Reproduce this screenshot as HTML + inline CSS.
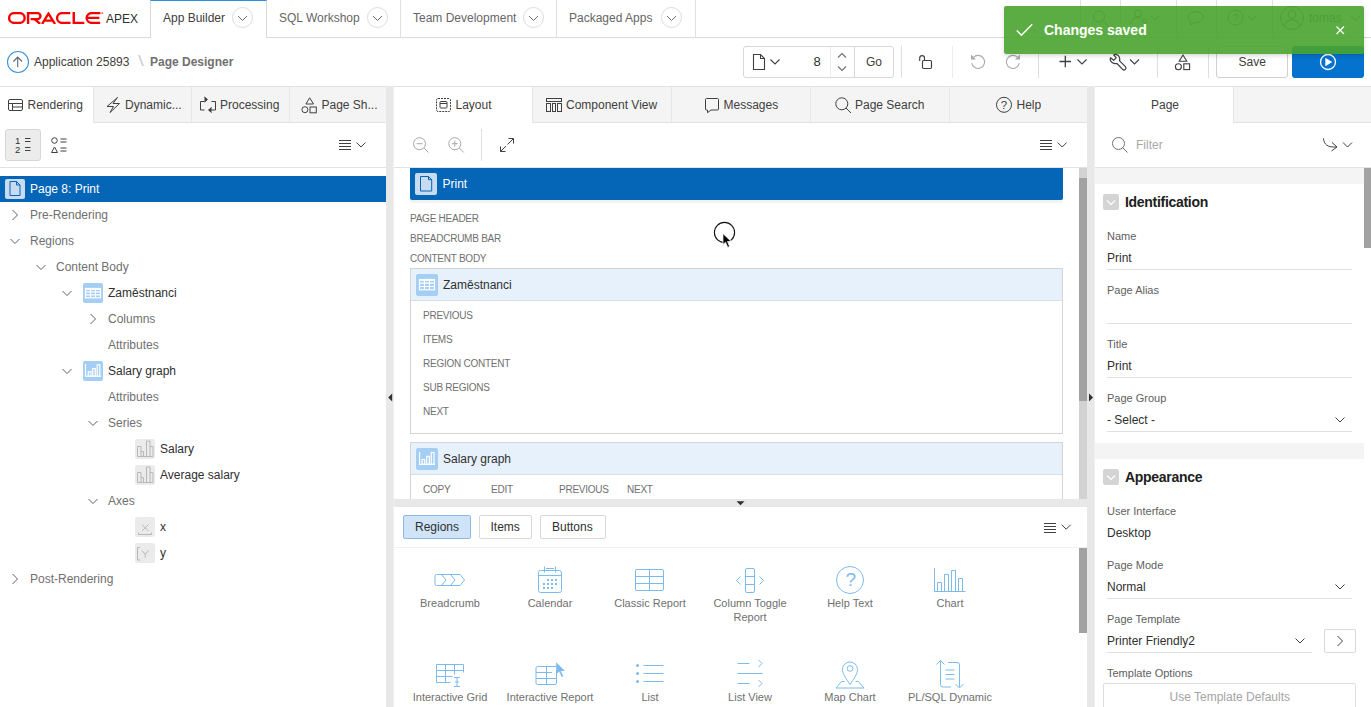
<!DOCTYPE html>
<html lang="en">
<head>
<meta charset="utf-8">
<title>Page Designer</title>
<style>
*{box-sizing:border-box;margin:0;padding:0}
html,body{width:1371px;height:707px;overflow:hidden;background:#fff}
body{font-family:"Liberation Sans",sans-serif;font-size:12px;color:#404040;position:relative}
.abs{position:absolute}
svg{position:absolute;overflow:visible}
.t{position:absolute;white-space:nowrap;line-height:16px}
.b{font-weight:bold}
/* header */
#hdr{position:absolute;left:0;top:0;width:1371px;height:38px;border-bottom:1px solid #d9d9d9;background:#fff}
.vsep{position:absolute;top:0;width:1px;height:37px;background:#e0e0e0}
.circ{position:absolute;width:21px;height:21px;border:1px solid #dcdcdc;border-radius:50%;top:7px}
.htxt{position:absolute;top:10px;font-size:12px;color:#666;line-height:16px;white-space:nowrap}
/* toolbar */
#tb{position:absolute;left:0;top:38px;width:1371px;height:48px;background:#fff}
.tsep{position:absolute;top:8px;width:1px;height:32px;background:#dedede}
/* panels */
.tabrow{position:absolute;top:86px;height:37px;background:#f4f4f4;border-top:1px solid #e2e2e2;border-bottom:1px solid #e2e2e2}
.tab{position:absolute;top:0;height:35px;border-right:1px solid #e6e6e6;font-size:12px;color:#404040;line-height:16px;white-space:nowrap}
.tab.sel{background:#fff;height:36px}
.tab span{position:absolute;top:10px}
.split{position:absolute;top:86px;width:8px;height:621px;background:#e8e8e8;border-right:1px solid #f0f0f0}
.ptb{position:absolute;top:123px;height:45px;background:#fff;border-bottom:1px solid #e2e2e2}
.row{position:absolute;left:0;width:386px;height:26px}
.row .t{top:5px}
.g{color:#707070}
.d{color:#303030}
.ico{position:absolute;top:3px;width:20px;height:20px;border-radius:2px}
.lbl{position:absolute;font-size:10px;line-height:14px;color:#707070;white-space:nowrap;letter-spacing:-0.25px}
.reg{position:absolute;left:410px;width:653px;border:1px solid #d4d4d4;background:#fff}
.reg .hd{position:absolute;left:0;top:0;width:651px;height:32px;background:#e7f1fc;border-bottom:1px solid #d6e0ea}
.gbtn{position:absolute;top:515px;height:24px;border:1px solid #d8d8d8;border-radius:2px;background:#fff}
.gl{position:absolute;width:100px;text-align:center;font-size:11px;line-height:14px;color:#707070}
.band{position:absolute;left:1095px;width:269px;height:16px;background:#f4f4f4}
.sec{position:absolute;left:1125px;font-size:14px;font-weight:bold;color:#202020;line-height:18px;white-space:nowrap;letter-spacing:-0.3px}
.col{position:absolute;left:1103px;width:16px;height:16px;background:#d4d4d4;border-radius:2px}
.pl{position:absolute;left:1107px;font-size:11px;line-height:14px;color:#606060;white-space:nowrap}
.pv{position:absolute;left:1107px;font-size:12px;line-height:16px;color:#303030;white-space:nowrap}
.ul{position:absolute;left:1107px;width:245px;height:1px;background:#e0e0e0}
</style>
</head>
<body>
<!-- HEADER -->
<div id="hdr">
  <div class="t" style="left:106px;top:11px;font-size:12px;color:#303030">APEX</div>
  <svg style="left:7.700px;top:11.800px;overflow:hidden" width="96.400" height="12.500" viewBox="0 0 96 13" preserveAspectRatio="none"><g fill="none" stroke="#f80000" stroke-width="2.4">
    <rect x="1.1" y="1.1" width="15.5" height="10.3" rx="5.15"/>
    <path d="M20 12.5V1.1h9.2a3.1 3.1 0 0 1 0 6.3H22.5M26.5 7.4l5.5 5"/>
    <path d="M34 12.5L40.3 1.6 46.8 12.5M37 9h8"/>
    <path d="M62 1.1H54a5.15 5.15 0 0 0 0 10.3h8.3"/>
    <path d="M65.5 0v11.4h10.5"/>
    <path d="M92 1.1H83.5a5.15 5.15 0 0 0 0 10.3h8.3M79.5 6.2h11.5"/>
  </g><circle cx="93.800" cy="1.200" r="1" fill="#f86060"/></svg>
  <div class="abs" style="left:150px;top:0;width:117px;height:38px;background:#fff;border-left:1px solid #d9d9d9;border-right:1px solid #d9d9d9;border-top:1px solid #2d8de0"></div>
  <div class="htxt" style="left:163px;color:#404040">App Builder</div>
  <div class="circ" style="left:232px"></div>
  <div class="htxt" style="left:279px">SQL Workshop</div>
  <div class="circ" style="left:367px"></div>
  <div class="vsep" style="left:400px"></div>
  <div class="htxt" style="left:413px">Team Development</div>
  <div class="circ" style="left:523px"></div>
  <div class="vsep" style="left:556px"></div>
  <div class="htxt" style="left:569px">Packaged Apps</div>
  <div class="circ" style="left:661px"></div>
  <div class="vsep" style="left:695px"></div>
  <svg style="left:0;top:0" width="1371" height="37" fill="none" stroke="#707070" stroke-width="1">
    <path d="M238 16l4.5 4.5 4.5-4.5M373 16l4.5 4.5 4.5-4.5M529 16l4.5 4.5 4.5-4.5M667 16l4.5 4.5 4.5-4.5"/>
  </svg>
  <!-- right side nav (beneath notification) -->
  <div class="vsep" style="left:1080px"></div>
  <div class="vsep" style="left:1120px"></div>
  <div class="vsep" style="left:1176px"></div>
  <div class="vsep" style="left:1216px"></div>
  <div class="vsep" style="left:1272px"></div>
  <svg style="left:0;top:0" width="1371" height="37" fill="none" stroke="#707070" stroke-width="1">
    <circle cx="1099" cy="16.5" r="5.5"/><path d="M1103 20.5l5 5"/>
    <circle cx="1138" cy="13.5" r="3.5"/><path d="M1131 24c0-4 3-6.5 7-6.500 2 0 3.500.7 4.500 1.600"/><circle cx="1145" cy="21" r="2"/>
    <path d="M1151 16l4 4 4-4"/>
    <path d="M1191 21.300a7.500 5.500 0 1 1 4 1.200l-4.500 2.500z"/>
    <circle cx="1235.500" cy="17.500" r="7.500"/>
    <path d="M1248 16l4 4 4-4"/>
    <circle cx="1292" cy="18" r="11.500"/><circle cx="1292" cy="14.500" r="4"/><path d="M1284 26c1-4 4-6 8-6s7 2 8 6"/>
    <path d="M1351 16l4.500 4.500 4.500-4.500"/>
  </svg>
  <div class="htxt" style="left:1232.500px;top:10px;font-size:11px;color:#707070">?</div>
  <div class="htxt" style="left:1309px">tomas</div>
</div>
<!-- TOOLBAR -->
<div id="tb">
  <svg style="left:0;top:0" width="400" height="48" fill="none">
    <circle cx="18" cy="24" r="10.500" stroke="#3c94e4" stroke-width="1.100"/>
    <path d="M17.700 29.300v-10.300M13.400 23.500l4.300-4.500 4.300 4.500" stroke="#56677a" stroke-width="1.100"/>
  </svg>
  <div class="t" style="left:34px;top:16px;color:#404040">Application 25893</div>
  <div class="t" style="left:138.400px;top:15px;color:#cfcfcf;font-size:15px;transform:scaleX(1.4);transform-origin:0 0">\</div>
  <div class="t b" style="left:150px;top:16px;color:#707070">Page Designer</div>

  <!-- page selector -->
  <div class="abs" style="left:743px;top:8px;width:151px;height:32px;border:1px solid #d8d8d8;border-radius:3px;background:#fff"></div>
  <div class="abs" style="left:830px;top:9px;width:1px;height:30px;background:#ececec"></div>
  <div class="abs" style="left:854px;top:9px;width:1px;height:30px;background:#d8d8d8"></div>
  <div class="t" style="left:813.500px;top:16px;font-size:13px;color:#303030">8</div>
  <div class="t" style="left:866px;top:16px;color:#404040">Go</div>
  <div class="tsep" style="left:901px"></div>
  <div class="tsep" style="left:952px;background:#ececec"></div>
  <div class="tsep" style="left:1038px"></div>
  <div class="tsep" style="left:1157px"></div>
  <div class="tsep" style="left:1208px"></div>
  <svg style="left:0;top:-38px" width="1371" height="86" fill="none" stroke="#404040" stroke-width="1.100">
    <!-- page icon -->
    <path d="M753.500 54.500h7l4 4v11h-11zM760.500 54.500v4h4"/>
    <path d="M770.500 59.500l4.500 4.500 4.500-4.500"/>
    <path d="M838 57.500l4-4 4 4M838 66.500l4 4 4-4" stroke="#707070"/>
    <!-- unlock -->
    <rect x="922.500" y="60.500" width="9" height="8" rx="1.200" stroke-width="1.150"/>
    <path d="M919.700 61v-3a2.400 2.400 0 0 1 4.800 0v2.500" stroke-width="1.150"/>
    <!-- undo / redo -->
    <g stroke="#aaa">
      <path d="M973.200 57.600a6.500 6.500 0 1 1-1.500 5.600"/>
      <path d="M971 54.500v5h5z" fill="#aaa" stroke="none"/>
      <path d="M1017.800 57.600a6.500 6.500 0 1 0 1.500 5.600"/>
      <path d="M1020 54.500v5h-5z" fill="#aaa" stroke="none"/>
    </g>
    <!-- plus -->
    <path d="M1059.500 61.500h11.500M1065.300 55.700v11.600" stroke-width="1.300"/>
    <path d="M1077.500 59.500l4.500 4.500 4.500-4.500"/>
    <!-- wrench -->
    <path d="M1113.700 54.900C1115 54 1118 54.500 1119 56.500C1120 58.500 1119.800 60 1119.600 60.800L1125.400 66.600A1.900 1.900 0 0 1 1122.600 69.300L1117 63.500C1115.500 63.900 1114 63.800 1112.500 62.800C1110.500 61.500 1109.800 59.500 1110.500 57.800L1113.700 60.300L1116.200 57.800Z" stroke-width="1.200" stroke-linejoin="round"/>
    <path d="M1130 59.500l4.500 4.500 4.500-4.500"/>
    <!-- shapes -->
    <path d="M1183 55l3.800 6.200h-7.600z"/><circle cx="1178.400" cy="66.700" r="3"/><rect x="1183.800" y="63.800" width="5.800" height="5.800"/>
  </svg>
  <div class="abs" style="left:1216px;top:8px;width:72px;height:32px;border:1px solid #d0d0d0;border-radius:3px;background:#fff"></div>
  <div class="t" style="left:1238.500px;top:16px;color:#404040">Save</div>
  <div class="abs" style="left:1292px;top:8px;width:72px;height:32px;border-radius:3px;background:#0572ce"></div>
  <svg style="left:1292px;top:8px" width="72" height="32" fill="none"><circle cx="36" cy="16" r="7.500" stroke="#fff" stroke-width="1.300"/><path d="M33.300 11.800l7 4.200-7 4.200z" fill="#fff"/></svg>
</div>

<!-- NOTIFICATION -->
<div class="abs" style="left:1004px;top:6px;width:360px;height:48px;border-radius:2px;background:rgba(73,164,47,0.9);box-shadow:0 2px 4px rgba(0,0,0,0.15);z-index:50">
  <svg style="left:12px;top:17px" width="18" height="14" fill="none" stroke="#fff" stroke-width="1.500"><path d="M0.800 7.500l4.700 4.700 10.700-11"/></svg>
  <div class="t b" style="left:40px;top:15px;font-size:14px;color:#fff;letter-spacing:0;line-height:18px">Changes saved</div>
  <svg style="left:332px;top:20px" width="9" height="9" fill="none" stroke="#fff" stroke-width="1.200"><path d="M0.500 0.500l7.500 7.500M8 0.500l-7.500 7.500"/></svg>
</div>
<!-- SPLITTERS -->
<div class="split" style="left:386px"></div>
<div class="split" style="left:1087px"></div>
<svg style="left:386px;top:86px" width="716" height="621"><path d="M6.200 307.500v8l-4-4z" fill="#303030"/><path d="M703 307.500v8l4-4z" fill="#303030"/></svg>

<!-- LEFT PANEL -->
<div class="tabrow" style="left:0;width:386px">
  <div class="tab sel" style="left:0;width:94px"><span style="left:27.500px">Rendering</span></div>
  <div class="tab" style="left:94px;width:98px"><span style="left:31px">Dynamic...</span></div>
  <div class="tab" style="left:192px;width:98px"><span style="left:28px">Processing</span></div>
  <div class="tab" style="left:290px;width:96px;border-right:0"><span style="left:31.500px">Page Sh...</span></div>
</div>
<svg style="left:0;top:86px" width="386" height="37" fill="none" stroke="#404040" stroke-width="1">
  <!-- rendering -->
  <rect x="8.500" y="13.500" width="14" height="11" rx="1.500"/><path d="M8.500 17.500h14M12.500 17.500v7M12.500 21h10"/>
  <!-- bolt -->
  <path d="M117.500 11.500l-10.500 9h6.500l-3.500 6 9.500-9h-6.500z" stroke-linejoin="round"/>
  <!-- processing -->
  <path d="M204.500 15.500h-4v8.500h4M204.500 11l2.800 2.500-2.800 2.500M205 13.500h2"/>
  <path d="M211.500 15.500h4v8.500h-6.500M211.500 21.500l-2.800 2.500 2.800 2.500"/>
  <path d="M207.800 13.500l-3.300-2.800v5.600z" fill="#404040" stroke="none"/>
  <path d="M208.200 24l3.300-2.800v5.600z" fill="#404040" stroke="none"/>
  <!-- shapes -->
  <path d="M309.700 11.800l3.800 6.200h-7.600z"/><circle cx="304.900" cy="23.700" r="3"/><rect x="310" y="21" width="6.300" height="5.800"/>
</svg>
<div class="ptb" style="left:0;width:386px">
  <div class="abs" style="left:5px;top:6px;width:36px;height:32px;background:#ececec;border:1px solid #d6d6d6;border-radius:3px"></div>
  <div class="t" style="left:15px;top:13px;font-size:9.500px;line-height:9px;color:#303030;letter-spacing:0">1</div>
  <div class="t" style="left:15px;top:22px;font-size:9.500px;line-height:9px;color:#303030;letter-spacing:0">2</div>
  <svg style="left:0;top:0" width="386" height="44" fill="none" stroke="#404040" stroke-width="1">
    <path d="M25 15.500h5.500M25 18.500h5.500M25 24.500h5.500M25 27.500h5.500"/>
    <circle cx="54.500" cy="17.500" r="2.800"/><path d="M54.500 24l3 5.500h-6z"/>
    <path d="M60.500 16h6M60.500 19h6M60.500 25h6M60.500 28h6"/>
    <path d="M339 17.500h12M339 20.500h12M339 23.500h12M339 26.500h12"/>
    <path d="M356.500 19.500l4.500 4.500 4.500-4.500"/>
  </svg>
</div>
<!-- TREE -->
<div id="tree" class="abs" style="left:0;top:176px;width:386px;height:531px">
  <div class="row" style="top:0;background:#0565b7"><div class="ico" style="left:5px;background:#c9dbf1"></div><div class="t" style="left:30px;color:#fff">Page 8: Print</div></div>
  <div class="row" style="top:26px"><div class="t g" style="left:30px">Pre-Rendering</div></div>
  <div class="row" style="top:52px"><div class="t g" style="left:30px">Regions</div></div>
  <div class="row" style="top:78px"><div class="t g" style="left:56px">Content Body</div></div>
  <div class="row" style="top:104px"><div class="ico" style="left:83px;background:#a5cef4"></div><div class="t d" style="left:108px">Zaměstnanci</div></div>
  <div class="row" style="top:130px"><div class="t g" style="left:108px">Columns</div></div>
  <div class="row" style="top:156px"><div class="t g" style="left:108px">Attributes</div></div>
  <div class="row" style="top:182px"><div class="ico" style="left:83px;background:#a5cef4"></div><div class="t d" style="left:108px">Salary graph</div></div>
  <div class="row" style="top:208px"><div class="t g" style="left:108px">Attributes</div></div>
  <div class="row" style="top:234px"><div class="t g" style="left:108px">Series</div></div>
  <div class="row" style="top:260px"><div class="ico" style="left:135px;background:#ebebeb"></div><div class="t d" style="left:160px">Salary</div></div>
  <div class="row" style="top:286px"><div class="ico" style="left:135px;background:#ebebeb"></div><div class="t d" style="left:160px">Average salary</div></div>
  <div class="row" style="top:312px"><div class="t g" style="left:108px">Axes</div></div>
  <div class="row" style="top:338px"><div class="ico" style="left:135px;background:#ebebeb"></div><div class="t d" style="left:160px">x</div></div>
  <div class="row" style="top:364px"><div class="ico" style="left:135px;background:#ebebeb"></div><div class="t d" style="left:160px">y</div></div>
  <div class="row" style="top:390px"><div class="t g" style="left:30px">Post-Rendering</div></div>
  <svg style="left:0;top:0" width="386" height="420" fill="none" stroke="#606060" stroke-width="1">
    <!-- chevrons -->
    <path d="M12.500 34l5 5-5 5"/>
    <path d="M10.500 63l4.500 4.500 4.500-4.500"/>
    <path d="M36.500 89l4.500 4.500 4.500-4.500"/>
    <path d="M62.500 115l4.500 4.500 4.500-4.500"/>
    <path d="M90.500 138l5 5-5 5"/>
    <path d="M62.500 193l4.500 4.500 4.500-4.500"/>
    <path d="M88.500 245l4.500 4.500 4.500-4.500"/>
    <path d="M88.500 323l4.500 4.500 4.500-4.500"/>
    <path d="M12.500 398l5 5-5 5"/>
    <!-- page icon -->
    <path d="M10 5.500h6.500l3.500 3.500v10.500h-10zM16.500 5.500v3.500h3.500" stroke="#0565b7"/>
    <!-- grid icon -->
    <g stroke="#fff" stroke-width="1.200"><rect x="85.500" y="112.500" width="15" height="9.300" fill="none"/><path d="M85.500 113h15" stroke-width="1.800"/><path d="M85.500 115.800h15M85.500 118.800h15M90.500 112.500v9.300M95.500 112.500v9.300"/></g>
    <!-- chart icon -->
    <g stroke="#fff" stroke-width="1.200"><path d="M85.500 188v12.200h15.500"/><rect x="88.300" y="195.700" width="2.600" height="4.500"/><rect x="92.700" y="192.600" width="2.600" height="7.600"/><rect x="97.200" y="188.800" width="2.600" height="11.400"/></g>
    <!-- series icons -->
    <g stroke="#b8b8b8"><path d="M137.500 280.500v-10h3.500v10M141 275.500h2.500v5M137.500 280.500h15.500M146.500 280.500v-15.500h3.500v15.500M150 270.500h3v10"/>
    <path d="M137.500 306.500v-10h3.500v10M141 301.500h2.500v5M137.500 306.500h15.500M146.500 306.500v-15.500h3.500v15.500M150 296.500h3v10"/>
    <path d="M142 348.500l6.500 6.500M148.500 348.500l-6.500 6.500M138.500 356.500v2h13v-2"/>
    <path d="M140 371.500h-2.500v12.500h2.500M142 374.500l3.200 3.800 3.200-3.800M145.200 378.300v3.200"/></g>
  </svg>
</div>
<!-- CENTER PANEL -->
<div class="tabrow" style="left:394px;width:693px">
  <div class="tab sel" style="left:0;width:139px"><span style="left:61.500px">Layout</span></div>
  <div class="tab" style="left:139px;width:139px"><span style="left:33px">Component View</span></div>
  <div class="tab" style="left:278px;width:139px"><span style="left:51.500px">Messages</span></div>
  <div class="tab" style="left:417px;width:139px"><span style="left:44px">Page Search</span></div>
  <div class="tab" style="left:556px;width:137px;border-right:0"><span style="left:66.500px">Help</span></div>
</div>
<svg style="left:394px;top:86px" width="693" height="37" fill="none" stroke="#404040" stroke-width="1">
  <!-- layout -->
  <rect x="42.500" y="12.500" width="14" height="13" rx="1.500" stroke-dasharray="2 1"/><rect x="46" y="15.500" width="7" height="6.500" rx=".8"/><path d="M46 17.500h7"/>
  <!-- component view -->
  <rect x="152.500" y="12.500" width="15" height="3"/><rect x="152.500" y="17.500" width="4" height="8"/><rect x="158.500" y="17.500" width="3" height="8"/><rect x="163.500" y="17.500" width="4" height="8"/>
  <!-- messages -->
  <path d="M312.500 12.500h11a1 1 0 0 1 1 1v9.500a1 1 0 0 1-1 1h-6.500l-3.500 2.700v-2.700h-1a1 1 0 0 1-1-1v-9.500a1 1 0 0 1 1-1z"/>
  <!-- search -->
  <circle cx="447.800" cy="17.800" r="6"/><path d="M452 22l5 5"/>
  <!-- help -->
  <circle cx="610" cy="18.800" r="7.500"/>
</svg>
<div class="t" style="left:1000.800px;top:97px;font-size:11.500px;color:#404040;letter-spacing:0">?</div>
<div class="ptb" style="left:394px;width:693px">
  <div class="abs" style="left:87px;top:6px;width:1px;height:32px;background:#e0e0e0"></div>
  <svg style="left:0;top:0" width="693" height="44" fill="none" stroke="#404040" stroke-width="1">
    <g stroke="#a8a8a8"><circle cx="25.500" cy="20.700" r="6"/><path d="M30 25l4.500 4.500M22.500 20.700h6"/>
    <circle cx="60.800" cy="20.700" r="6"/><path d="M65.300 25l4.500 4.500M57.800 20.700h6M60.800 17.700v6"/></g>
    <path d="M113.500 21.500l6-6M114.500 15.500h5v5M112 23l-5.500 5.500M106.500 23.500v5h5"/>
    <path d="M646 17.500h12M646 20.500h12M646 23.500h12M646 26.500h12"/>
    <path d="M663.700 19.500l4.500 4.500 4.500-4.500"/>
  </svg>
</div>
<!-- layout canvas -->
<div class="abs" style="left:394px;top:168px;width:685px;height:331px;overflow:hidden;background:#fff">
</div>
<div class="abs" style="left:410px;top:168px;width:653px;height:32px;background:#0565b7;border-radius:0 0 2px 2px;box-shadow:0 3px 0 #f3f3f3"></div>
<div class="abs" style="left:415px;top:173px;width:22px;height:22px;background:#c9dbf1;border-radius:2px"></div>
<svg style="left:415px;top:173px" width="22" height="22" fill="none" stroke="#0565b7"><path d="M5.500 3.500h8l3.200 3.200v11.300h-11.200zM13.500 3.500v3.200h3.200"/></svg>
<div class="t" style="left:442.500px;top:176px;color:#fff">Print</div>
<div class="lbl" style="left:410px;top:212px">PAGE HEADER</div>
<div class="lbl" style="left:410px;top:232px">BREADCRUMB BAR</div>
<div class="lbl" style="left:410px;top:252px">CONTENT BODY</div>
<div class="reg" style="top:268px;height:166px"><div class="hd"></div></div>
<div class="abs" style="left:416px;top:274px;width:22px;height:22px;background:#a5cef4;border-radius:2px"></div>
<svg style="left:416px;top:274px" width="22" height="22" fill="none" stroke="#fff"><g stroke-width="1.200"><rect x="3.500" y="5.500" width="15" height="10.300"/><path d="M3.500 6h15" stroke-width="1.800"/><path d="M3.500 9.200h15M3.500 12.500h15M8.500 5.500v10.300M13.500 5.500v10.300"/></g></svg>
<div class="t d" style="left:443px;top:277px">Zaměstnanci</div>
<div class="lbl" style="left:423px;top:309px">PREVIOUS</div>
<div class="lbl" style="left:423px;top:333px">ITEMS</div>
<div class="lbl" style="left:423px;top:357px">REGION CONTENT</div>
<div class="lbl" style="left:423px;top:381px">SUB REGIONS</div>
<div class="lbl" style="left:423px;top:405px">NEXT</div>
<div class="reg" style="top:442px;height:70px"><div class="hd"></div></div>
<div class="abs" style="left:416px;top:448px;width:22px;height:22px;background:#a5cef4;border-radius:2px"></div>
<svg style="left:416px;top:448px" width="22" height="22" fill="none" stroke="#fff"><g stroke-width="1.200"><path d="M3.600 4v12.300h15.400"/><rect x="6.100" y="11.600" width="2.600" height="4.700"/><rect x="10.700" y="8.300" width="2.700" height="8"/><rect x="15.300" y="4.500" width="2.700" height="11.800"/></g></svg>
<div class="t d" style="left:443px;top:451px">Salary graph</div>
<div class="lbl" style="left:423px;top:483px">COPY</div>
<div class="lbl" style="left:491px;top:483px">EDIT</div>
<div class="lbl" style="left:559px;top:483px">PREVIOUS</div>
<div class="lbl" style="left:627px;top:483px">NEXT</div>
<!-- canvas scrollbar -->
<div class="abs" style="left:1079px;top:168px;width:8px;height:331px;background:#d2d2d2"></div>
<div class="abs" style="left:1079px;top:178px;width:8px;height:223px;background:#a2a2a2"></div>
<!-- cursor -->
<svg style="left:710px;top:220px;z-index:20" width="30" height="34" fill="none"><circle cx="14.500" cy="12.500" r="10.100" stroke="#111" stroke-width="1.100" fill="#fff"/><path d="M12.900 13.400L12.900 24.700L15.500 22.300L17.700 27.400L19.700 26.500L17.500 21.500L21.200 21.400Z" fill="#000" stroke="#fff" stroke-width="0.900" stroke-linejoin="round"/></svg>
<!-- horizontal splitter -->
<div class="abs" style="left:394px;top:499px;width:693px;height:8px;background:#e8e8e8"></div>
<svg style="left:394px;top:499px" width="693" height="8"><path d="M342.500 2.200h8l-4 4z" fill="#303030"/></svg>
<!-- gallery -->
<div class="abs" style="left:394px;top:507px;width:693px;height:41px;background:#fff;border-bottom:1px solid #f0f0f0"></div>
<div class="gbtn" style="left:403px;width:68px;background:#cfe4f8;border-color:#8db9e2"></div>
<div class="gbtn" style="left:479px;width:53px"></div>
<div class="gbtn" style="left:540px;width:66px"></div>
<div class="t d" style="left:415px;top:519px">Regions</div>
<div class="t d" style="left:490.500px;top:519px">Items</div>
<div class="t d" style="left:552px;top:519px">Buttons</div>
<svg style="left:394px;top:507px" width="693" height="41" fill="none" stroke="#404040"><path d="M650 16.500h12M650 19.500h12M650 22.500h12M650 25.500h12M667.700 17.700l4.500 4.500 4.500-4.500"/></svg>
<div class="abs" style="left:394px;top:548px;width:685px;height:159px;background:#fff"></div>
<div class="abs" style="left:1079px;top:548px;width:8px;height:159px;background:#fff"></div>
<div class="abs" style="left:1079px;top:548px;width:8px;height:85px;background:#a2a2a2"></div>
<div class="gl" style="left:400px;top:596px">Breadcrumb</div>
<div class="gl" style="left:500px;top:596px">Calendar</div>
<div class="gl" style="left:600px;top:596px">Classic Report</div>
<div class="gl" style="left:700px;top:596px">Column Toggle<br>Report</div>
<div class="gl" style="left:800px;top:596px">Help Text</div>
<div class="gl" style="left:900px;top:596px">Chart</div>
<div class="gl" style="left:400px;top:690px">Interactive Grid</div>
<div class="gl" style="left:495px;top:690px;width:110px">Interactive Report</div>
<div class="gl" style="left:600px;top:690px">List</div>
<div class="gl" style="left:700px;top:690px">List View</div>
<div class="gl" style="left:800px;top:690px">Map Chart</div>
<div class="gl" style="left:900px;top:690px">PL/SQL Dynamic</div>
<svg id="gicons" style="left:394px;top:548px" width="685" height="159" fill="none" stroke="#7dbbee" stroke-width="1">
  <!-- breadcrumb -->
  <path d="M42.500 26.500h23.500l4.500 5.500-4.500 5.500h-23.500a1.500 1.500 0 0 1-1.500-1.500v-8a1.500 1.500 0 0 1 1.500-1.500zM47.500 26.500l4.500 5.500-4.500 5.500M56.500 26.500l4.500 5.500-4.500 5.500"/>
  <!-- calendar -->
  <rect x="144.500" y="22.500" width="23" height="22" rx="2"/><path d="M144.500 27.500h23M150.500 18.500v6M161.500 18.500v6M152 20.500h8"/>
  <g fill="#7dbbee" stroke="none"><rect x="153" y="31" width="2" height="2"/><rect x="157" y="31" width="2" height="2"/><rect x="161" y="31" width="2" height="2"/><rect x="149" y="35" width="2" height="2"/><rect x="153" y="35" width="2" height="2"/><rect x="157" y="35" width="2" height="2"/><rect x="161" y="35" width="2" height="2"/><rect x="149" y="39" width="2" height="2"/><rect x="153" y="39" width="2" height="2"/><rect x="157" y="39" width="2" height="2"/></g>
  <!-- classic report -->
  <rect x="241.500" y="21.500" width="28" height="21" rx="1.500"/><path d="M241.500 28.500h28M241.500 35.500h28M255.500 21.500v21"/>
  <!-- column toggle -->
  <rect x="351.500" y="20.500" width="9" height="24" rx="1.500"/><path d="M351.500 28.500h9M351.500 36.500h9M346.500 28.500l-4 4 4 4M365.500 28.500l4 4-4 4"/>
  <!-- help -->
  <circle cx="456" cy="32" r="13.500"/>
  <!-- chart -->
  <path d="M540.500 20v23.500h31M543.500 43.500v-9h4v9M550.500 43.500v-17h4v17M557.500 43.500v-21h4v21M564.500 43.500v-13h4v13"/>
  <!-- interactive grid -->
  <path d="M42.500 116.500h27v8M42.500 116.500v18h14M42.500 122.500h27M42.500 128.500h16M51.500 116.500v18M60.500 116.500v10M60 129.500h6M60 138.500h6M63 129.500v9M61 134h4"/>
  <!-- interactive report -->
  <path d="M162.500 132v-10M162.500 118.500h-19a1.500 1.500 0 0 0-1.500 1.500v15a1.500 1.500 0 0 0 1.500 1.500h17.500a1.500 1.500 0 0 0 1.500-1.500v-3M142 124.500h16M142 130.500h20.500M152.500 118.500v18"/>
  <path d="M162.200 114.200v12l3-2.600 2.500 5.400 1.600-.8-2.500-5.200h4.200z" fill="#7dbbee" stroke="none"/>
  <!-- list -->
  <path d="M249.500 117.500h20M249.500 125.500h20M249.500 133.500h20"/><g fill="#7dbbee" stroke="none"><circle cx="243.500" cy="117.500" r="1.500"/><circle cx="243.500" cy="125.500" r="1.500"/><circle cx="243.500" cy="133.500" r="1.500"/></g>
  <!-- list view -->
  <path d="M343.500 115.500h12M343.500 125.500h25M343.500 135.500h12M364.500 112l3.500 3.500-3.500 3.500M364.500 132l3.500 3.500-3.500 3.500"/>
  <!-- map -->
  <path d="M456 136.500c-4-6-7.500-10.500-7.500-15a7.500 7.500 0 0 1 15 0c0 4.500-3.500 9-7.500 15z"/><circle cx="456" cy="120.500" r="2.800"/><path d="M450.500 133.500h-3l-5.500 6.500h28l-5.500-6.500h-3"/>
  <!-- plsql -->
  <path d="M546.500 112.500v24a2.500 2.500 0 0 0 2.500 2.500h8M542.500 116.500l4-4 4 4M554 114.500h9a2.500 2.500 0 0 1 2.500 2.500v22.500M561.500 136l4 4 4-4M551.500 122h9M551.500 126.500h9M551.500 131h9"/>
</svg>
<div class="t" style="left:845.500px;top:569px;font-size:19px;line-height:22px;color:#7dbbee;letter-spacing:0">?</div>
<!-- RIGHT PANEL -->
<div class="tabrow" style="left:1095px;width:276px">
  <div class="tab sel" style="left:0;width:139px"><span style="left:56px">Page</span></div>
</div>
<div class="ptb" style="left:1095px;width:276px">
  <svg style="left:0;top:0" width="276" height="44" fill="none" stroke="#707070" stroke-width="1">
    <circle cx="23.500" cy="20.500" r="6"/><path d="M27.800 24.800l4.700 4.700"/>
    <path d="M228.500 15.500c.5 6 4 9 13 8.500M237 19.500l5 4.500-5.500 4" stroke="#404040"/>
    <path d="M248 19.500l4.500 4.500 4.500-4.500" stroke="#404040"/>
  </svg>
  <div class="t" style="left:41px;top:14px;color:#a8a8a8">Filter</div>
</div>
<div class="abs" style="left:1095px;top:168px;width:276px;height:539px;background:#fff"></div>
<div class="band" style="top:168px"></div>
<div class="col" style="top:194px"></div>
<div class="sec" style="top:193px">Identification</div>
<div class="pl" style="top:229px">Name</div>
<div class="pv" style="top:250px">Print</div>
<div class="ul" style="top:269px"></div>
<div class="pl" style="top:283px">Page Alias</div>
<div class="ul" style="top:323px"></div>
<div class="pl" style="top:337px">Title</div>
<div class="pv" style="top:358px">Print</div>
<div class="ul" style="top:377px"></div>
<div class="pl" style="top:391px">Page Group</div>
<div class="pv" style="top:412px">- Select -</div>
<div class="ul" style="top:431px"></div>
<div class="band" style="top:443px"></div>
<div class="col" style="top:469px"></div>
<div class="sec" style="top:468px">Appearance</div>
<div class="pl" style="top:504px">User Interface</div>
<div class="pv" style="top:525px">Desktop</div>
<div class="pl" style="top:558px">Page Mode</div>
<div class="pv" style="top:579px">Normal</div>
<div class="ul" style="top:598px"></div>
<div class="pl" style="top:612px">Page Template</div>
<div class="pv" style="top:633px">Printer Friendly2</div>
<div class="ul" style="top:652px;width:205px"></div>
<div class="abs" style="left:1324px;top:629px;width:32px;height:24px;border:1px solid #dadada;border-radius:2px;background:#fff"></div>
<div class="pl" style="top:666px">Template Options</div>
<div class="abs" style="left:1103px;top:683px;width:253px;height:30px;border:1px solid #dedede;border-radius:2px;background:#fff"></div>
<div class="t" style="left:1169.500px;top:689px;color:#a4a4a4">Use Template Defaults</div>
<svg style="left:1095px;top:168px" width="276" height="539" fill="none" stroke="#404040" stroke-width="1">
  <path d="M12 32.500l4 4 4-4M12 307.500l4 4 4-4" stroke="#fff" stroke-width="1.200"/>
  <path d="M240.500 249.500l4.500 4.500 4.500-4.500"/>
  <path d="M240.500 416.500l4.500 4.500 4.500-4.500"/>
  <path d="M200.500 470.500l4.500 4.500 4.500-4.500"/>
  <path d="M242.500 468l5 5-5 5"/>
</svg>
<!-- right scrollbar -->
<div class="abs" style="left:1364px;top:168px;width:7px;height:80px;background:#a2a2a2"></div>
</body>
</html>
